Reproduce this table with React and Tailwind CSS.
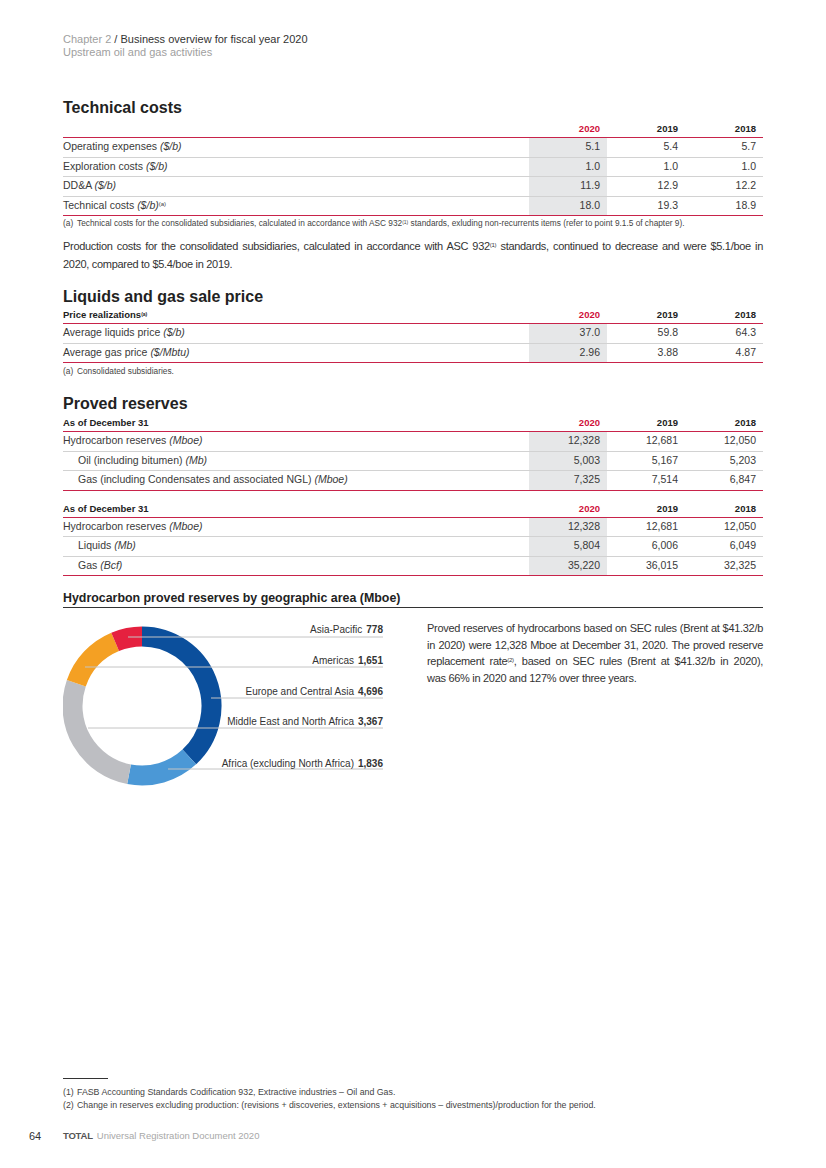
import React from "react";

const techRows = [
  { label: "Operating expenses", unit: "($/b)", values: ["5.1", "5.4", "5.7"] },
  { label: "Exploration costs", unit: "($/b)", values: ["1.0", "1.0", "1.0"] },
  { label: "DD&A", unit: "($/b)", values: ["11.9", "12.9", "12.2"] },
  { label: "Technical costs", unit: "($/b)", sup: "(a)", values: ["18.0", "19.3", "18.9"] },
];

const priceRows = [
  { label: "Average liquids price", unit: "($/b)", values: ["37.0", "59.8", "64.3"] },
  { label: "Average gas price", unit: "($/Mbtu)", values: ["2.96", "3.88", "4.87"] },
];

const reserveRows = [
  { label: "Hydrocarbon reserves", unit: "(Mboe)", values: ["12,328", "12,681", "12,050"] },
  { label: "Oil (including bitumen)", unit: "(Mb)", indent: true, values: ["5,003", "5,167", "5,203"] },
  { label: "Gas (including Condensates and associated NGL)", unit: "(Mboe)", indent: true, values: ["7,325", "7,514", "6,847"] },
];

const reserveRows2 = [
  { label: "Hydrocarbon reserves", unit: "(Mboe)", values: ["12,328", "12,681", "12,050"] },
  { label: "Liquids", unit: "(Mb)", indent: true, values: ["5,804", "6,006", "6,049"] },
  { label: "Gas", unit: "(Bcf)", indent: true, values: ["35,220", "36,015", "32,325"] },
];

// donut slices, clockwise from 12 o'clock
const slices = [
  { name: "Europe and Central Asia", value: 4696, color: "#0b4f9c" },
  { name: "Africa (excluding North Africa)", value: 1836, color: "#4b98d6" },
  { name: "Middle East and North Africa", value: 3367, color: "#bdbec2" },
  { name: "Americas", value: 1651, color: "#f4a023" },
  { name: "Asia-Pacific", value: 778, color: "#e5213f" },
];

const labels = [
  { name: "Asia-Pacific", value: "778", y: 24.5, ly: 29, x0: 65 },
  { name: "Americas", value: "1,651", y: 55.5, ly: 59, x0: 22 },
  { name: "Europe and Central Asia", value: "4,696", y: 86.5, ly: 90, x0: 148 },
  { name: "Middle East and North Africa", value: "3,367", y: 116.5, ly: 120, x0: 25 },
  { name: "Africa (excluding North Africa)", value: "1,836", y: 158.5, ly: 161, x0: 105 },
];

const CX = 79;
const CY = 98;
const R = 69.5;

const pt = (deg) => {
  const a = (deg * Math.PI) / 180;
  return [CX + R * Math.sin(a), CY - R * Math.cos(a)];
};

const arcPath = (a0, a1) => {
  const [x0, y0] = pt(a0);
  const [x1, y1] = pt(a1);
  const large = a1 - a0 > 180 ? 1 : 0;
  return `M${x0} ${y0} A${R} ${R} 0 ${large} 1 ${x1} ${y1}`;
};

function Donut() {
  const total = slices.reduce((s, d) => s + d.value, 0);
  let acc = 0;
  return (
    <svg width="340" height="178" viewBox="0 0 340 178" className="block">
      {slices.map((s) => {
        const a0 = (acc / total) * 360;
        acc += s.value;
        const a1 = (acc / total) * 360;
        return <path key={s.name} d={arcPath(a0, a1)} fill="none" stroke={s.color} strokeWidth="20" />;
      })}
      {labels.map((l) => (
        <g key={l.name}>
          <line x1={l.x0} y1={l.ly} x2="320" y2={l.ly} stroke="#c4c4c4" strokeWidth="1" />
          <text
            x="320"
            y={l.y}
            textAnchor="end"
            fontSize="10"
            fill="#333"
            fontFamily="'Liberation Sans', Arial, sans-serif"
          >
            {l.name}
            <tspan fontWeight="bold" dx="4">{l.value}</tspan>
          </text>
        </g>
      ))}
    </svg>
  );
}

function DataTable({ head, rows }) {
  return (
    <div>
      <div className="flex h-[19px] items-center pt-[3px] border-b border-[#c8234a] text-[9.5px] font-bold text-[#222]">
        <div className="flex-1">{head}</div>
        <div className="w-[78px] pr-[7px] text-right text-[#d0103a]">2020</div>
        <div className="w-[78px] pr-[7px] text-right">2019</div>
        <div className="w-[78px] pr-[7px] text-right">2018</div>
      </div>
      {rows.map((r, i) => (
        <div
          key={i}
          className={
            i === rows.length - 1
              ? "flex h-[19.5px] border-b border-[#c8234a] text-[10.5px] text-[#3a3a3a]"
              : "flex h-[19.5px] border-b-[1.5px] border-[#d2d2d2] text-[10.5px] text-[#3a3a3a]"
          }
        >
          <div className={r.indent ? "flex-1 flex items-center pl-[15px]" : "flex-1 flex items-center"}>
            <span>
              {r.label} <i>{r.unit}</i>
              {r.sup && <sup className="text-[6px]">{r.sup}</sup>}
            </span>
          </div>
          <div className="w-[78px] pr-[7px] flex items-center justify-end bg-[#e6e7e8]">{r.values[0]}</div>
          <div className="w-[78px] pr-[7px] flex items-center justify-end">{r.values[1]}</div>
          <div className="w-[78px] pr-[7px] flex items-center justify-end">{r.values[2]}</div>
        </div>
      ))}
    </div>
  );
}

function Note({ mark, children, size = "text-[8.3px]" }) {
  return (
    <div className={`flex ${size} leading-[12px] text-[#444]`}>
      <span className="w-[14px] shrink-0">{mark}</span>
      <span>{children}</span>
    </div>
  );
}

function Heading({ children, className = "" }) {
  return <h2 className={`text-[16px] leading-[20px] font-bold text-[#222] ${className}`}>{children}</h2>;
}

export default function App() {
  return (
    <div className="h-[1168px] w-[826px] bg-white flex flex-col pt-[33px] px-[63px] pb-[25px] font-['Liberation_Sans',Arial,sans-serif] text-[#333]">
      {/* running header */}
      <div className="text-[11px] leading-[13px]">
        <div>
          <span className="text-[#a0a0a0]">Chapter 2</span>
          <span className="text-[#333]"> / Business overview for fiscal year 2020</span>
        </div>
        <div className="text-[#a0a0a0]">Upstream oil and gas activities</div>
      </div>

      {/* Technical costs */}
      <Heading className="mt-[39px]">Technical costs</Heading>
      <div className="mt-[1px]">
        <DataTable head="" rows={techRows} />
      </div>
      <div className="mt-[1px]">
        <Note mark="(a)">
          Technical costs for the consolidated subsidiaries, calculated in accordance with ASC 932
          <sup className="text-[5px] leading-none">(1)</sup> standards, exluding non-recurrents items (refer to point 9.1.5 of chapter 9).
        </Note>
      </div>
      <p className="mt-[9px] text-[11px] leading-[17.5px] tracking-[-0.3px] text-justify text-[#333]">
        Production costs for the consolidated subsidiaries, calculated in accordance with ASC 932
        <sup className="text-[6px] leading-none">(1)</sup> standards, continued to decrease and were $5.1/boe in 2020, compared to $5.4/boe in 2019.
      </p>

      {/* Liquids and gas sale price */}
      <Heading className="mt-[14px]">Liquids and gas sale price</Heading>
      <div className="-mt-[2px]">
        <DataTable
          head={
            <span>
              Price realizations<sup className="text-[5px] leading-none">(a)</sup>
            </span>
          }
          rows={priceRows}
        />
      </div>
      <div className="mt-[2px]">
        <Note mark="(a)">Consolidated subsidiaries.</Note>
      </div>

      {/* Proved reserves */}
      <Heading className="mt-[17px]">Proved reserves</Heading>
      <div className="-mt-[1px]">
        <DataTable head="As of December 31" rows={reserveRows} />
      </div>
      <div className="mt-[8px]">
        <DataTable head="As of December 31" rows={reserveRows2} />
      </div>

      {/* chart */}
      <h3 className="mt-[14px] text-[12.4px] leading-[16px] font-bold text-[#222] border-b border-[#333] pb-[1px]">
        Hydrocarbon proved reserves by geographic area (Mboe)
      </h3>
      <div className="grid grid-cols-[340px_1fr] gap-[24px]">
        <Donut />
        <p className="mt-[12px] text-[11px] leading-[16.7px] tracking-[-0.3px] text-justify text-[#333]">
          Proved reserves of hydrocarbons based on SEC rules (Brent at $41.32/b in 2020) were 12,328 Mboe at December 31,
          2020. The proved reserve replacement rate<sup className="text-[6px] leading-none">(2)</sup>, based on SEC rules (Brent at
          $41.32/b in 2020), was{"\u00a0"}66% in 2020 and 127% over three years.
        </p>
      </div>

      {/* footnotes */}
      <div className="mt-auto">
        <div className="w-[45px] border-t border-[#333]" />
        <div className="mt-[7px] flex flex-col gap-[1px]">
          <Note mark="(1)" size="text-[8.8px]">FASB Accounting Standards Codification 932, Extractive industries – Oil and Gas.</Note>
          <Note mark="(2)" size="text-[8.8px]">
            Change in reserves excluding production: (revisions + discoveries, extensions + acquisitions – divestments)/production for the period.
          </Note>
        </div>
      </div>

      {/* footer */}
      <div className="mt-[18px] -ml-[34px] flex items-center leading-[14px]">
        <span className="w-[34px] text-[11px] text-[#333]">64</span>
        <span className="text-[9.5px] font-bold text-[#555] tracking-[-0.2px]">TOTAL</span>
        <span className="ml-[4px] text-[9.5px] text-[#a8a8a8]">Universal Registration Document 2020</span>
      </div>
    </div>
  );
}
